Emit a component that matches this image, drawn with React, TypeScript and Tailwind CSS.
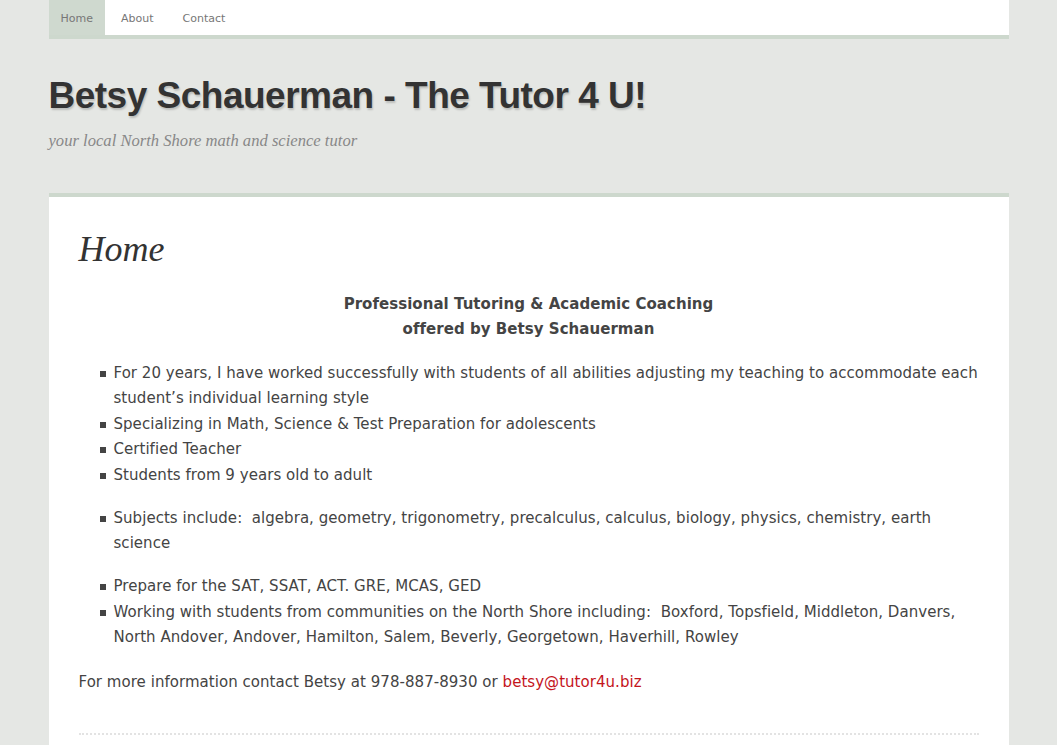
export default function App() {
  const bullets1 = [
    'For 20 years, I have worked successfully with students of all abilities adjusting my teaching to accommodate each student\u2019s individual learning style',
    'Specializing in Math, Science & Test Preparation for adolescents',
    'Certified Teacher',
    'Students from 9 years old to adult',
  ];
  const bullets3 = [
    'Prepare for the SAT, SSAT, ACT. GRE, MCAS, GED',
    'Working with students from communities on the North Shore including:\u00a0 Boxford, Topsfield, Middleton, Danvers, North Andover, Andover, Hamilton, Salem, Beverly, Georgetown, Haverhill, Rowley',
  ];

  const Item = ({ text }: { text: string }) => (
    <li className="relative pl-[35px]">
      <span className="absolute left-[21px] top-[10px] h-[6px] w-[6px] bg-[#444]" />
      {text}
    </li>
  );

  return (
    <div className="min-h-[745px] bg-[#e5e7e4] font-['DejaVu_Sans',sans-serif]">
      <div className="mx-auto w-[960px]">
        {/* nav */}
        <nav className="flex h-[39px] border-b-4 border-[#cdd8cd] bg-white pt-[3px] text-[11px] text-[#777]">
          <a className="-mt-[3px] flex items-center bg-[#cfd9cf] px-[12px] pt-[3px]">Home</a>
          <a className="flex items-center px-[16px]">About</a>
          <a className="flex items-center px-[13px]">Contact</a>
        </nav>

        {/* header */}
        <header className="pt-[35px] pb-[39px]">
          <h1 className="font-['Liberation_Sans',sans-serif] text-[37px] font-bold leading-[44px] tracking-[-0.5px] text-[#333] [text-shadow:1px_2px_2px_rgba(0,0,0,0.18)]">
            Betsy Schauerman - The Tutor 4 U!
          </h1>
          <p className="mt-[11px] font-['Liberation_Serif',serif] text-[16.6px] italic text-[#888]">
            your local North Shore math and science tutor
          </p>
        </header>

        {/* content */}
        <main className="border-t-4 border-[#cdd8cd] bg-white px-[30px] pt-[30px] pb-[10px] text-[15px] leading-[25.5px] tracking-[0.04px] text-[#444]">
          <h2 className="mb-[21px] font-['Liberation_Serif',serif] text-[36px] italic leading-[44px] text-[#333]">
            Home
          </h2>
          <p className="text-center font-bold">
            Professional Tutoring &amp; Academic Coaching
            <br />
            offered by Betsy Schauerman
          </p>
          <ul className="mt-[18px]">
            {bullets1.map((t) => (
              <Item key={t} text={t} />
            ))}
          </ul>
          <ul className="mt-[17.5px]">
            <Item text={'Subjects include:\u00a0 algebra, geometry, trigonometry, precalculus, calculus, biology, physics, chemistry, earth science'} />
          </ul>
          <ul className="mt-[17.5px]">
            {bullets3.map((t) => (
              <Item key={t} text={t} />
            ))}
          </ul>
          <p className="mt-[19px]">
            For more information contact Betsy at 978-887-8930 or{' '}
            <a className="text-[#c4151c]">betsy@tutor4u.biz</a>
          </p>
          <div className="mt-[38px] border-b-2 border-dotted border-[#e3e3e3]" />
          <div className="h-[40px]" />
        </main>
      </div>
    </div>
  );
}
